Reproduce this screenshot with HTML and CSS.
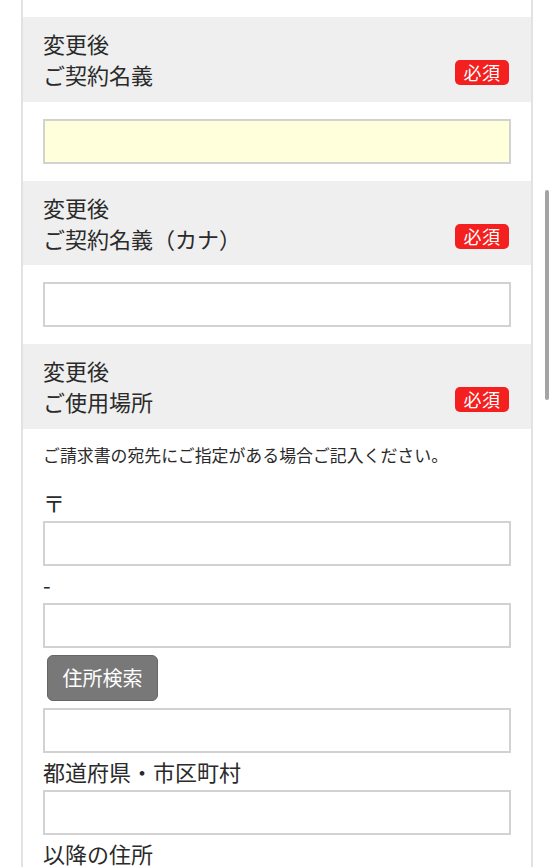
FILE: index.html
```html
<!DOCTYPE html>
<html lang="ja">
<head>
<meta charset="utf-8">
<title>変更後 ご契約名義</title>
<link rel="stylesheet" href="styles.css">
</head>
<body>
<div class="form">
  <div class="spacer"></div>

  <div class="row-head">
    <div class="row-title">変更後<br>ご契約名義</div>
    <span class="badge">必須</span>
  </div>
  <div class="row-body">
    <input class="field field-filled" type="text">
  </div>

  <div class="row-head">
    <div class="row-title">変更後<br>ご契約名義（カナ）</div>
    <span class="badge">必須</span>
  </div>
  <div class="row-body">
    <input class="field" type="text">
  </div>

  <div class="row-head">
    <div class="row-title">変更後<br>ご使用場所</div>
    <span class="badge">必須</span>
  </div>
  <div class="row-body row-address">
    <p class="note">ご請求書の宛先にご指定がある場合ご記入ください。</p>
    <div class="label">〒</div>
    <input class="field" type="text">
    <div class="label">-</div>
    <input class="field" type="text">
    <button class="search-btn" type="button">住所検索</button>
    <input class="field" type="text">
    <div class="label">都道府県・市区町村</div>
    <input class="field" type="text">
    <div class="label">以降の住所</div>
  </div>
</div>
<div class="scrollbar"></div>
</body>
</html>
```

FILE: styles.css
```css
html, body {
  margin: 0;
  padding: 0;
  background: #ffffff;
  height: 867px;
  overflow: hidden;
}

body {
  font-family: "Noto Sans CJK JP", "Noto Sans", sans-serif;
  color: #2a2a2a;
}

.form {
  margin-left: 21px;
  width: 508px;
  border-left: 2px solid #e2e2e2;
  border-right: 2px solid #e2e2e2;
  min-height: 900px;
}

.spacer {
  height: 17px;
}

.row-head {
  background: #efefef;
  padding: 11px 22px 11.5px 20px;
  display: flex;
  justify-content: space-between;
  align-items: flex-end;
}

.row-title {
  font-size: 22px;
  line-height: 31px;
}

.badge {
  background: #f41f1f;
  color: #ffffff;
  font-size: 18px;
  line-height: 25px;
  height: 25px;
  width: 54px;
  text-align: center;
  border-radius: 5px;
  margin-bottom: 5px;
  letter-spacing: 0.5px;
}

.row-body {
  padding: 17px 20px;
}

.field {
  display: block;
  box-sizing: border-box;
  width: 100%;
  height: 45px;
  margin: 0;
  border: 2px solid #d2d2d2;
  background: #ffffff;
  font-size: 18px;
  padding: 0 8px;
  outline: none;
}

.field-filled {
  background: #ffffdb;
}

.row-address {
  padding-top: 13px;
  padding-bottom: 0;
}

.row-address .field {
  margin: 4px 0 3px;
}

.note {
  margin: 0 0 20px;
  font-size: 16.9px;
  line-height: 25px;
}

.label {
  font-size: 22px;
  line-height: 30px;
}

.search-btn {
  display: block;
  margin: 7px 0 7px 4px;
  width: 111px;
  height: 46px;
  background: #787878;
  border: 1px solid #666666;
  border-radius: 6px;
  color: #ffffff;
  font-family: "Noto Sans CJK JP", "Noto Sans", sans-serif;
  font-size: 20px;
  padding: 0;
}

.scrollbar {
  position: fixed;
  left: 545px;
  top: 190px;
  width: 4px;
  height: 210px;
  border-radius: 2px;
  background: #a4a4a4;
}
```
